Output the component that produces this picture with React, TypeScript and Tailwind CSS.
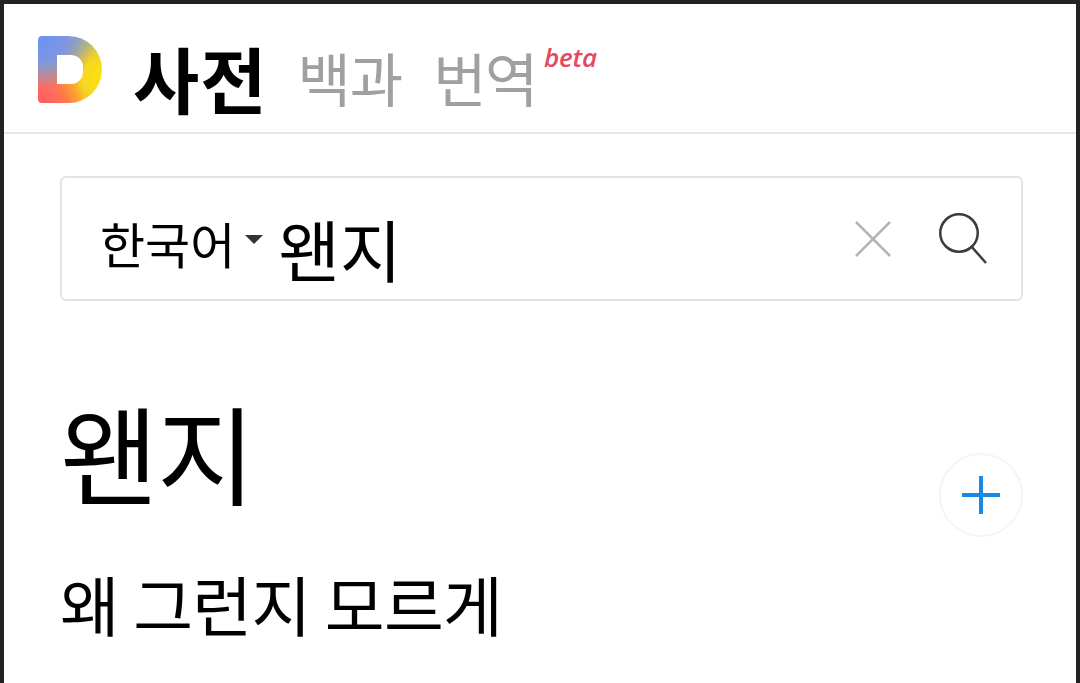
const cjk = "font-['Noto_Sans_CJK_KR',sans-serif]";

function Logo() {
  return (
    <div className="relative w-[64px] h-[67px] shrink-0 overflow-hidden rounded-l-[4px] rounded-r-[34px] bg-[radial-gradient(circle_at_10%_5%,#6b93f5_0%,#7f96e0_25%,transparent_58%),radial-gradient(circle_at_0%_100%,#ff5a60_0%,#ff6a60_18%,transparent_50%),radial-gradient(circle_at_100%_62%,#ffe010_0%,#f5d820_25%,transparent_60%),radial-gradient(circle_at_60%_100%,#ff8f20_0%,#ff8f20_30%,transparent_70%),linear-gradient(#a3b090,#d09a70)]">
      <div className="absolute left-[19px] top-[19px] w-[26px] h-[29px] rounded-r-[12px] bg-white" />
    </div>
  );
}

export default function App() {
  return (
    <div className={`w-[1080px] h-[683px] overflow-hidden bg-white border-x-4 border-t-4 border-[#222222] ${cjk}`}>
      {/* Header */}
      <header className="h-[130px] flex items-start pl-[34px] border-b-2 border-[#e8e8e8]">
        <div className="mt-[32px]">
          <Logo />
        </div>
        <span className="ml-[31px] mt-[25px] text-[72px] leading-[96px] font-bold tracking-[1px] text-black">사전</span>
        <span className="ml-[30px] mt-[33px] text-[58px] leading-[80px] tracking-[-1px] text-[#a0a0a0]">백과</span>
        <span className="ml-[31px] mt-[33px] text-[58px] leading-[80px] tracking-[-1.5px] text-[#a0a0a0]">번역</span>
        <span className="ml-[7px] mt-[35px] text-[26px] leading-[36px] italic font-['Open_Sans',sans-serif] font-semibold tracking-[-0.2px] text-[#e5485f]">beta</span>
      </header>

      <main className="pl-[56px] pr-[53px]">
        {/* Search box */}
        <div className="mt-[42px] h-[125px] flex items-center border-2 border-[#e3e3e3] rounded-[6px] pl-[38px]">
          <span className="mt-[8px] text-[49px] leading-[60px] text-black">한국어</span>
          <span className="ml-[10px] mt-[2px] w-0 h-0 border-x-[9px] border-x-transparent border-t-[9px] border-t-[#333333]" />
          <span className="ml-[15px] mt-[18px] text-[67px] leading-[80px] text-black">왠지</span>
          <div className="ml-auto mr-[34px] flex items-center">
            <svg width="38" height="38" viewBox="0 0 38 38" fill="none" className="mr-[47px]">
              <path d="M2 2 L36 36 M36 2 L2 36" stroke="#b4b4b4" strokeWidth="2.5" />
            </svg>
            <svg width="48" height="52" viewBox="0 0 48 52" fill="none">
              <circle cx="20" cy="20" r="18.75" stroke="#3c3c3c" strokeWidth="2.5" />
              <path d="M32 33 L47 50" stroke="#3c3c3c" strokeWidth="2.5" />
            </svg>
          </div>
        </div>

        {/* Word */}
        <div className="mt-[85px] flex items-start justify-between">
          <h1 className="text-[107px] leading-[130px] tracking-[-1.5px] text-black">왠지</h1>
          <button className="mt-[67px] w-[84px] h-[84px] flex items-center justify-center rounded-full border-2 border-[#f0f6fc]">
            <svg width="40" height="40" viewBox="0 0 40 40" fill="none">
              <path d="M20 1 V39 M1 20 H39" stroke="#1b87e6" strokeWidth="4" />
            </svg>
          </button>
        </div>
        <p className="mt-[26px] text-[65px] leading-[80px] tracking-[-0.6px] text-black">왜 그런지 모르게</p>
      </main>
    </div>
  );
}
